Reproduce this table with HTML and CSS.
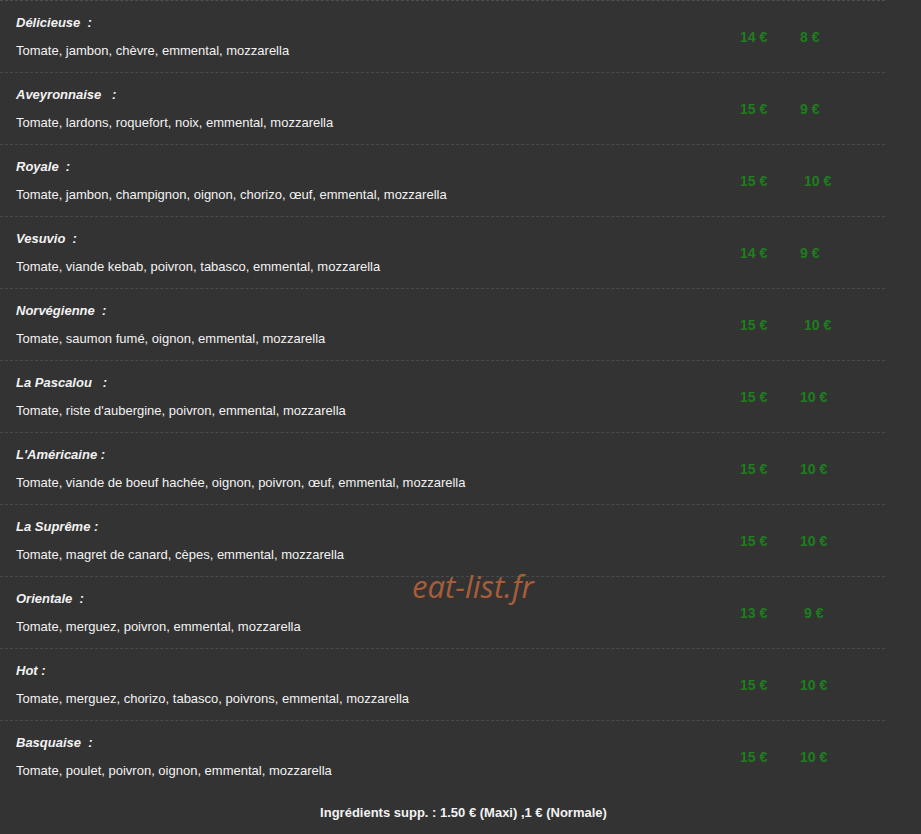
FILE: index.html
```html
<!DOCTYPE html>
<html lang="fr">
<head>
    <meta charset="UTF-8">
    <meta name="viewport" content="width=device-width, initial-scale=1.0">
    <title>Pizzas - Carte</title>
    <link rel="stylesheet" href="styles.css">
</head>
<body>
    <div class="menu">
        <!-- Liste des pizzas -->
        <ul class="pizza-list">
            <li class="pizza">
                <div class="pizza-info">
                    <p class="pizza-name">Délicieuse&nbsp; :</p>
                    <p class="pizza-desc">Tomate, jambon, chèvre, emmental, mozzarella</p>
                </div>
                <div class="prices">
                    <span class="price">14 €</span>
                    <span class="price">8 €</span>
                </div>
            </li>
            <li class="pizza">
                <div class="pizza-info">
                    <p class="pizza-name">Aveyronnaise&nbsp;&nbsp; :</p>
                    <p class="pizza-desc">Tomate, lardons, roquefort, noix, emmental, mozzarella</p>
                </div>
                <div class="prices">
                    <span class="price">15 €</span>
                    <span class="price">9 €</span>
                </div>
            </li>
            <li class="pizza">
                <div class="pizza-info">
                    <p class="pizza-name">Royale&nbsp; :</p>
                    <p class="pizza-desc">Tomate, jambon, champignon, oignon, chorizo, œuf, emmental, mozzarella</p>
                </div>
                <div class="prices">
                    <span class="price">15 €</span>
                    <span class="price shift">10 €</span>
                </div>
            </li>
            <li class="pizza">
                <div class="pizza-info">
                    <p class="pizza-name">Vesuvio&nbsp; :</p>
                    <p class="pizza-desc">Tomate, viande kebab, poivron, tabasco, emmental, mozzarella</p>
                </div>
                <div class="prices">
                    <span class="price">14 €</span>
                    <span class="price">9 €</span>
                </div>
            </li>
            <li class="pizza">
                <div class="pizza-info">
                    <p class="pizza-name">Norvégienne&nbsp; :</p>
                    <p class="pizza-desc">Tomate, saumon fumé, oignon, emmental, mozzarella</p>
                </div>
                <div class="prices">
                    <span class="price">15 €</span>
                    <span class="price shift">10 €</span>
                </div>
            </li>
            <li class="pizza">
                <div class="pizza-info">
                    <p class="pizza-name">La Pascalou&nbsp;&nbsp; :</p>
                    <p class="pizza-desc">Tomate, riste d'aubergine, poivron, emmental, mozzarella</p>
                </div>
                <div class="prices">
                    <span class="price">15 €</span>
                    <span class="price">10 €</span>
                </div>
            </li>
            <li class="pizza">
                <div class="pizza-info">
                    <p class="pizza-name">L'Américaine :</p>
                    <p class="pizza-desc">Tomate, viande de boeuf hachée, oignon, poivron, œuf, emmental, mozzarella</p>
                </div>
                <div class="prices">
                    <span class="price">15 €</span>
                    <span class="price">10 €</span>
                </div>
            </li>
            <li class="pizza">
                <div class="pizza-info">
                    <p class="pizza-name">La Suprême :</p>
                    <p class="pizza-desc">Tomate, magret de canard, cèpes, emmental, mozzarella</p>
                </div>
                <div class="prices">
                    <span class="price">15 €</span>
                    <span class="price">10 €</span>
                </div>
            </li>
            <li class="pizza">
                <div class="pizza-info">
                    <p class="pizza-name">Orientale&nbsp; :</p>
                    <p class="pizza-desc">Tomate, merguez, poivron, emmental, mozzarella</p>
                </div>
                <div class="prices">
                    <span class="price">13 €</span>
                    <span class="price shift">9 €</span>
                </div>
            </li>
            <li class="pizza">
                <div class="pizza-info">
                    <p class="pizza-name">Hot :</p>
                    <p class="pizza-desc">Tomate, merguez, chorizo, tabasco, poivrons, emmental, mozzarella</p>
                </div>
                <div class="prices">
                    <span class="price">15 €</span>
                    <span class="price">10 €</span>
                </div>
            </li>
            <li class="pizza">
                <div class="pizza-info">
                    <p class="pizza-name">Basquaise&nbsp; :</p>
                    <p class="pizza-desc">Tomate, poulet, poivron, oignon, emmental, mozzarella</p>
                </div>
                <div class="prices">
                    <span class="price">15 €</span>
                    <span class="price">10 €</span>
                </div>
            </li>
        </ul>

        <p class="extras">Ingrédients supp. : 1.50 € (Maxi) ,1 € (Normale)</p>

        <!-- Filigrane -->
        <span class="watermark">eat-list.fr</span>
    </div>
</body>
</html>
```

FILE: styles.css
```css
body, p, ul, li, div {
    margin: 0;
    padding: 0;
    box-sizing: border-box;
}

body {
    background-color: #333333;
    font-family: 'Liberation Sans', Arial, sans-serif;
    color: #f2f2f2;
    font-size: 13px;
}

.menu {
    position: relative;
    width: 921px;
    min-height: 834px;
}

/* Liste des pizzas */
.pizza-list {
    list-style: none;
    width: 885px;
}

.pizza {
    display: flex;
    align-items: center;
    height: 72px;
    padding: 13px 0 12px 16px;
    border-top: 1px dashed #4a4a4a;
}

.pizza:first-child {
    border-top-color: #505050;
}

.pizza-info {
    flex: 1;
    display: flex;
    flex-direction: column;
    gap: 10px;
}

.pizza-name {
    font-weight: bold;
    font-style: italic;
    line-height: 18px;
    white-space: pre;
}

.pizza-desc {
    line-height: 18px;
}

.prices {
    display: flex;
    width: 145px;
    padding-bottom: 1px;
}

.price {
    width: 60px;
    color: #1f7d1f;
    font-weight: bold;
    font-size: 14px;
}

.price.shift {
    padding-left: 4px;
}

/* Ingrédients supplémentaires */
.extras {
    text-align: center;
    font-weight: bold;
    line-height: 18px;
    padding: 12px 0 0 6px;
}

.watermark {
    position: absolute;
    left: 412px;
    top: 565px;
    font-family: 'Open Sans', 'DejaVu Sans', sans-serif;
    font-style: italic;
    font-size: 31px;
    color: #b5623b;
    opacity: 0.9;
}
```
